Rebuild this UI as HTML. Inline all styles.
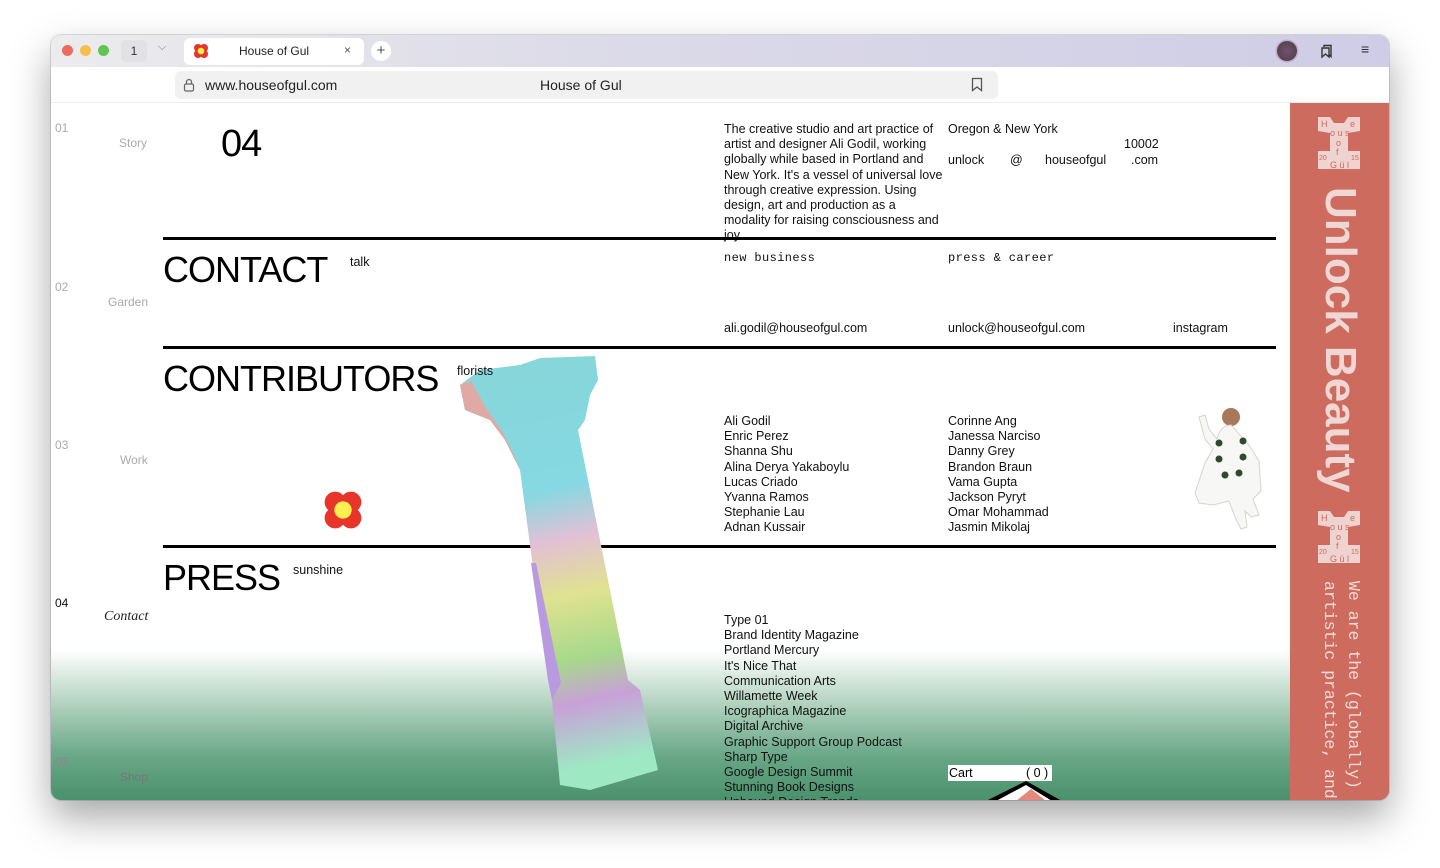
<!DOCTYPE html>
<html><head><meta charset="utf-8"><style>
*{margin:0;padding:0;box-sizing:border-box}
body{width:1440px;height:868px;background:#fff;font-family:"Liberation Sans",sans-serif;position:relative;overflow:hidden}
.win{position:absolute;left:51px;top:35px;width:1338px;height:765px;border-radius:10px;overflow:hidden;box-shadow:0 18px 40px rgba(0,0,0,.35),0 0 0 1px rgba(0,0,0,.12);background:#fff}
.a{position:absolute;white-space:nowrap}
.tabbar{position:absolute;left:0;top:0;width:1338px;height:32px;background:linear-gradient(90deg,#ececee,#dcdbe8 40%,#cfcde6)}
.addr{position:absolute;left:0;top:32px;width:1338px;height:36px;background:#fff;border-bottom:1px solid #eee}
.t13{font-size:12.5px;line-height:15.2px;color:#111}
.rule{position:absolute;left:112px;width:1113px;height:3px;background:#000}
.big{font-size:36px;color:#000;letter-spacing:-1px}
.nav{font-size:12px;color:#aaa}
.mono{font-family:"Liberation Mono",monospace;font-size:12px;letter-spacing:.4px;color:#111}
.logo{position:absolute;width:46px;height:56px}
.logo b{position:absolute;font-weight:normal;font-size:9px;color:#cd6b5e;line-height:9px}
</style></head><body>
<div class="win">
 <div class="tabbar">
  <div class="a" style="left:11px;top:10px;width:11px;height:11px;border-radius:50%;background:#ed6a5e"></div>
  <div class="a" style="left:29px;top:10px;width:11px;height:11px;border-radius:50%;background:#f5bf4f"></div>
  <div class="a" style="left:47px;top:10px;width:11px;height:11px;border-radius:50%;background:#61c554"></div>
  <div class="a" style="left:70px;top:5px;width:26px;height:22px;border-radius:5px;background:#e2e2e6;font-size:12px;text-align:center;line-height:22px;color:#333">1</div>
  <div class="a" style="left:107px;top:6px;font-size:11px;color:#777">⌵</div>
  <div class="a" style="left:133px;top:3px;width:180px;height:27px;border-radius:6px;background:#fff"></div>
  <svg class="a" style="left:142px;top:8px" width="16" height="16" viewBox="0 0 16 16"><g fill="#e8352a"><circle cx="5" cy="5" r="4"/><circle cx="11" cy="5" r="4"/><circle cx="5" cy="11" r="4"/><circle cx="11" cy="11" r="4"/></g><circle cx="8" cy="8" r="3.3" fill="#fbf04f"/></svg>
  <div class="a" style="left:188px;top:9px;font-size:12px;color:#222">House of Gul</div>
  <div class="a" style="left:293px;top:8px;font-size:12px;color:#555">×</div>
  <div class="a" style="left:320px;top:6px;width:20px;height:20px;border-radius:50%;background:#fff;text-align:center;line-height:19px;font-size:15px;color:#555">+</div>
  <div class="a" style="left:1226px;top:6px;width:20px;height:20px;border-radius:50%;background:radial-gradient(#7a4a78,#3b4a32);box-shadow:0 0 0 1.5px #c9a5d8"></div>
  <svg class="a" style="left:1268px;top:8px" width="16" height="16" viewBox="0 0 16 16" fill="none" stroke="#333" stroke-width="1.4"><path d="M5 4V2.5h7v11l-2-2"/><path d="M3 5h7v9l-3.5-3L3 14z"/></svg>
  <div class="a" style="left:1310px;top:6px;font-size:14px;color:#333">≡</div>
 </div>
 <div class="addr">
  <div class="a" style="left:124px;top:4px;width:823px;height:28px;border-radius:6px;background:#f1f1f2"></div>
  <svg class="a" style="left:132px;top:11px" width="12" height="14" viewBox="0 0 12 14" fill="none" stroke="#666" stroke-width="1.2"><rect x="1.5" y="6" width="9" height="7" rx="1.5"/><path d="M3.5 6V4a2.5 2.5 0 0 1 5 0v2"/></svg>
  <div class="a" style="left:154px;top:10px;font-size:14px;color:#222">www.houseofgul.com</div>
  <div class="a" style="left:489px;top:10px;font-size:14px;color:#222">House of Gul</div>
  <svg class="a" style="left:920px;top:10px" width="12" height="15" viewBox="0 0 12 15" fill="none" stroke="#555" stroke-width="1.3"><path d="M1.5 1.5h9v12L6 10l-4.5 3.5z"/></svg>
 </div>
 <div class="a" style="left:0;top:68px;width:1338px;height:697px;overflow:hidden">
  <div class="a" style="left:0;top:547px;width:1338px;height:150px;background:linear-gradient(#fff,#a9cdb8 40%,#6aa888 70%,#4a916c)"></div>
  <div class="a nav" style="left:4px;top:18px">01</div><div class="a nav" style="left:68px;top:33px">Story</div>
  <div class="a nav" style="left:4px;top:177px">02</div><div class="a nav" style="left:57px;top:192px">Garden</div>
  <div class="a nav" style="left:4px;top:335px">03</div><div class="a nav" style="left:69px;top:350px">Work</div>
  <div class="a nav" style="left:4px;top:493px;color:#111">04</div><div class="a" style="left:53px;top:506px;font-family:'Liberation Serif',serif;font-style:italic;font-size:14px;color:#222">Contact</div>
  <div class="a nav" style="left:4px;top:652px;color:#888">05</div><div class="a nav" style="left:69px;top:667px;color:#777">Shop</div>
  <div class="a" style="left:170px;top:20px;font-size:38px;color:#000;letter-spacing:-1px">04</div>
  <div class="a t13" style="left:673px;top:19px;white-space:normal;width:220px">The creative studio and art practice of artist and designer Ali Godil, working globally while based in Portland and New York. It's a vessel of universal love through creative expression. Using design, art and production as a modality for raising consciousness and joy</div>
  <div class="a t13" style="left:897px;top:19px">Oregon &amp; New York</div>
  <div class="a t13" style="left:1073px;top:34px">10002</div>
  <div class="a t13" style="left:897px;top:50px">unlock</div><div class="a t13" style="left:959px;top:50px">@</div><div class="a t13" style="left:994px;top:50px">houseofgul</div><div class="a t13" style="left:1080px;top:50px">.com</div>
  <div class="rule" style="top:134px"></div>
  <div class="a big" style="left:112px;top:146px">CONTACT</div>
  <div class="a t13" style="left:299px;top:152px">talk</div>
  <div class="a mono" style="left:673px;top:148px">new business</div>
  <div class="a mono" style="left:897px;top:148px">press &amp; career</div>
  <div class="a t13" style="left:673px;top:218px">ali.godil@houseofgul.com</div>
  <div class="a t13" style="left:897px;top:218px">unlock@houseofgul.com</div>
  <div class="a t13" style="left:1122px;top:218px">instagram</div>
  <div class="rule" style="top:243px"></div>
  <div class="a big" style="left:112px;top:255px">CONTRIBUTORS</div>
  <div class="a t13" style="left:673px;top:311px">Ali Godil<br>Enric Perez<br>Shanna Shu<br>Alina Derya Yakaboylu<br>Lucas Criado<br>Yvanna Ramos<br>Stephanie Lau<br>Adnan Kussair</div>
  <div class="a t13" style="left:897px;top:311px">Corinne Ang<br>Janessa Narciso<br>Danny Grey<br>Brandon Braun<br>Vama Gupta<br>Jackson Pyryt<br>Omar Mohammad<br>Jasmin Mikolaj</div>
  <svg class="a" style="left:1122px;top:300px" width="100" height="130" viewBox="0 0 100 130"><circle cx="58" cy="14" r="9" fill="#a7785a"/><path d="M58 22c-8 0-12 6-14 14l-8-10-4-14-6 2 6 22 8 10-8 14-10 30 4 10 14 2 16-4 6 16 6 12 6-2-2-16 6 6 8-2-6-16 8-8-2-30-10-16z" fill="#f7f7f5" stroke="#d4d4d0"/><g fill="#2e4a2c"><circle cx="46" cy="40" r="3.5"/><circle cx="70" cy="38" r="3.5"/><circle cx="46" cy="56" r="3.5"/><circle cx="70" cy="54" r="3.5"/><circle cx="52" cy="72" r="3.5"/><circle cx="66" cy="70" r="3.5"/></g></svg>
  <svg class="a" style="left:270px;top:386px" width="44" height="42" viewBox="0 0 16 16"><g fill="#e8352a"><circle cx="5" cy="5" r="4"/><circle cx="11" cy="5" r="4"/><circle cx="5" cy="11" r="4"/><circle cx="11" cy="11" r="4"/></g><circle cx="8" cy="8" r="3.3" fill="#fbf04f"/></svg>
  <div class="rule" style="top:442px"></div>
  <div class="a big" style="left:112px;top:454px">PRESS</div>
  <div class="a t13" style="left:242px;top:460px">sunshine</div>
  <div class="a t13" style="left:673px;top:510px">Type 01<br>Brand Identity Magazine<br>Portland Mercury<br>It's Nice That<br>Communication Arts<br>Willamette Week<br>Icographica Magazine<br>Digital Archive<br>Graphic Support Group Podcast<br>Sharp Type<br>Google Design Summit<br>Stunning Book Designs<br>Unbound Design Trends</div>
  <svg class="a" style="left:400px;top:250px" width="220" height="450" viewBox="0 0 220 450">
   <defs><linearGradient id="g" x1="0" y1="0" x2="0.1" y2="1"><stop offset="0" stop-color="#86d6d8"/><stop offset=".35" stop-color="#86d8e2"/><stop offset=".47" stop-color="#e2c0d4"/><stop offset=".6" stop-color="#dfe290"/><stop offset=".75" stop-color="#a6d98a"/><stop offset=".85" stop-color="#c8a0d8"/><stop offset="1" stop-color="#9ee8c4"/></linearGradient></defs>
   <path d="M9 32 L29 17 L69 12 L89 5 L144 3 L147 27 L139 42 L134 67 L127 77 L177 327 L189 337 L207 417 L139 437 L109 432 L101 347 L97 327 L69 117 L54 87 L39 67 L14 57 Z" fill="url(#g)"/>
   <path d="M9 32 L20 28 L35 55 L52 80 L62 100 L69 117 L54 87 L39 67 L14 57z" fill="#e0aaa4"/>
   <path d="M85 210 L110 330 L101 347 L97 327 L80 210z" fill="#b99ae0"/>
  </svg>
  <div class="a t13" style="left:406px;top:261px">florists</div>
  <div class="a" style="left:897px;top:662px;width:104px;height:16px;background:#fff;font-size:12.5px;line-height:16px;color:#000;padding-left:1px">Cart<span style="position:absolute;left:78px">( 0 )</span></div>
  <svg class="a" style="left:935px;top:678px" width="80" height="20" viewBox="0 0 80 20"><path d="M0 20 L40 0 L76 20z" fill="#000"/><path d="M10 20 L40 4 L66 20z" fill="#fff"/><path d="M30 20 L45 8 L60 20z" fill="#e58a7a"/></svg>
  <div class="a" style="left:1239px;top:0;width:99px;height:697px;background:#cd6b5e;overflow:hidden">
   <div class="logo" style="left:26px;top:12px">
    <svg width="46" height="56" viewBox="0 0 46 56"><path d="M2 2h12l4 6h10l4-6h12v14l-12 2v18h12v18H2V36h12V18L2 16z" fill="#efd3d0"/></svg>
    <b style="left:5px;top:5px">H</b><b style="left:34px;top:5px">e</b><b style="left:14px;top:14px">o u s</b><b style="left:20px;top:24px">o</b><b style="left:20px;top:33px">f</b><b style="left:3px;top:39px;font-size:7px">20</b><b style="left:35px;top:39px;font-size:7px">15</b><b style="left:14px;top:46px">G ü l</b>
   </div>
   <div class="logo" style="left:26px;top:406px">
    <svg width="46" height="56" viewBox="0 0 46 56"><path d="M2 2h12l4 6h10l4-6h12v14l-12 2v18h12v18H2V36h12V18L2 16z" fill="#efd3d0"/></svg>
    <b style="left:5px;top:5px">H</b><b style="left:34px;top:5px">e</b><b style="left:14px;top:14px">o u s</b><b style="left:20px;top:24px">o</b><b style="left:20px;top:33px">f</b><b style="left:3px;top:39px;font-size:7px">20</b><b style="left:35px;top:39px;font-size:7px">15</b><b style="left:14px;top:46px">G ü l</b>
   </div>
   <div class="a" style="left:24px;top:84px;writing-mode:vertical-rl;font-size:44px;font-weight:bold;color:#f0d7d4;line-height:52px">Unlock Beauty</div>
   <div class="a" style="left:27px;top:478px;writing-mode:vertical-rl;font-family:'Liberation Mono',monospace;font-size:16.5px;line-height:24px;color:#f3dcda">We are the (globally)<br>artistic practice, and</div>
  </div>
 </div>
</div>
</body></html>
